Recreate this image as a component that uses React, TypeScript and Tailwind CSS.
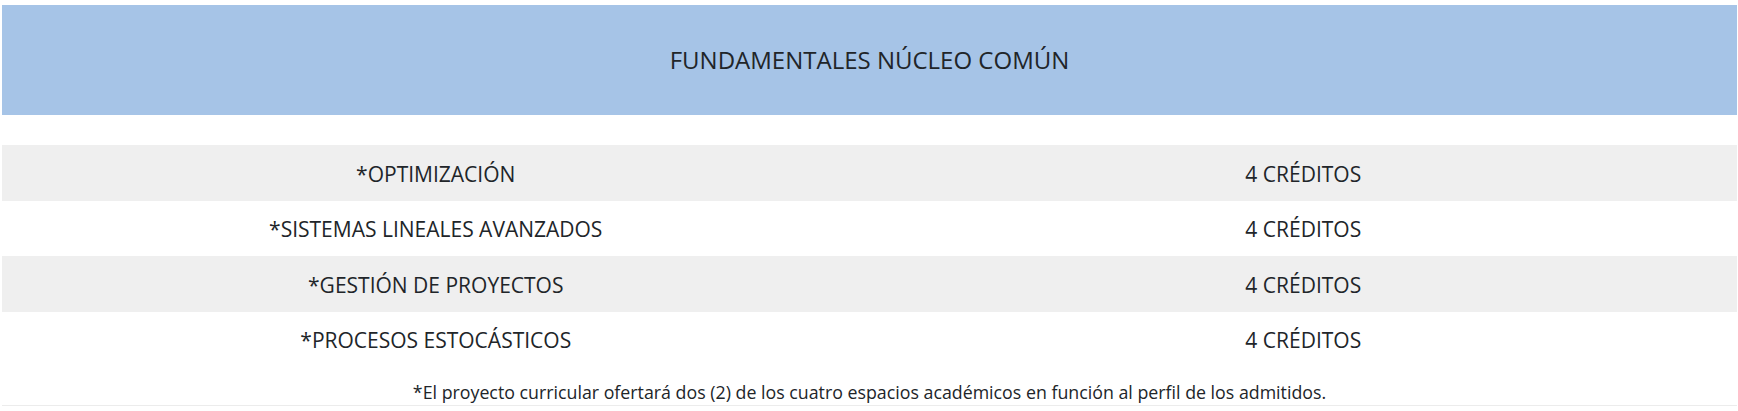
import React from "react";

const rows = [
  "*OPTIMIZACIÓN",
  "*SISTEMAS LINEALES AVANZADOS",
  "*GESTIÓN DE PROYECTOS",
  "*PROCESOS ESTOCÁSTICOS",
];

export default function App() {
  return (
    <div
      className="w-[1738px] h-[411px] bg-white text-[#212529] pl-[2px] pr-[1px] pt-[5px]"
      style={{ fontFamily: '"Open Sans", "Liberation Sans", sans-serif' }}
    >
      <div className="h-[110px] bg-[#a6c4e7] flex items-center justify-center text-[24px]">
        FUNDAMENTALES NÚCLEO COMÚN
      </div>
      <div className="mt-[30px]">
        {rows.map((r, i) => (
          <div
            key={r}
            className={`grid grid-cols-2 h-[55.5px] items-center text-[21px] pt-[3px] ${
              i % 2 === 0 ? "bg-[#efefef]" : "bg-white"
            }`}
          >
            <div className="text-center">{r}</div>
            <div className="text-center">4 CRÉDITOS</div>
          </div>
        ))}
      </div>
      <div className="h-[39px] flex items-center justify-center text-[17.8px] border-b border-[#ececec] pt-[12px]">
        *El proyecto curricular ofertará dos (2) de los cuatro espacios académicos en función al perfil de los admitidos.
      </div>
    </div>
  );
}
